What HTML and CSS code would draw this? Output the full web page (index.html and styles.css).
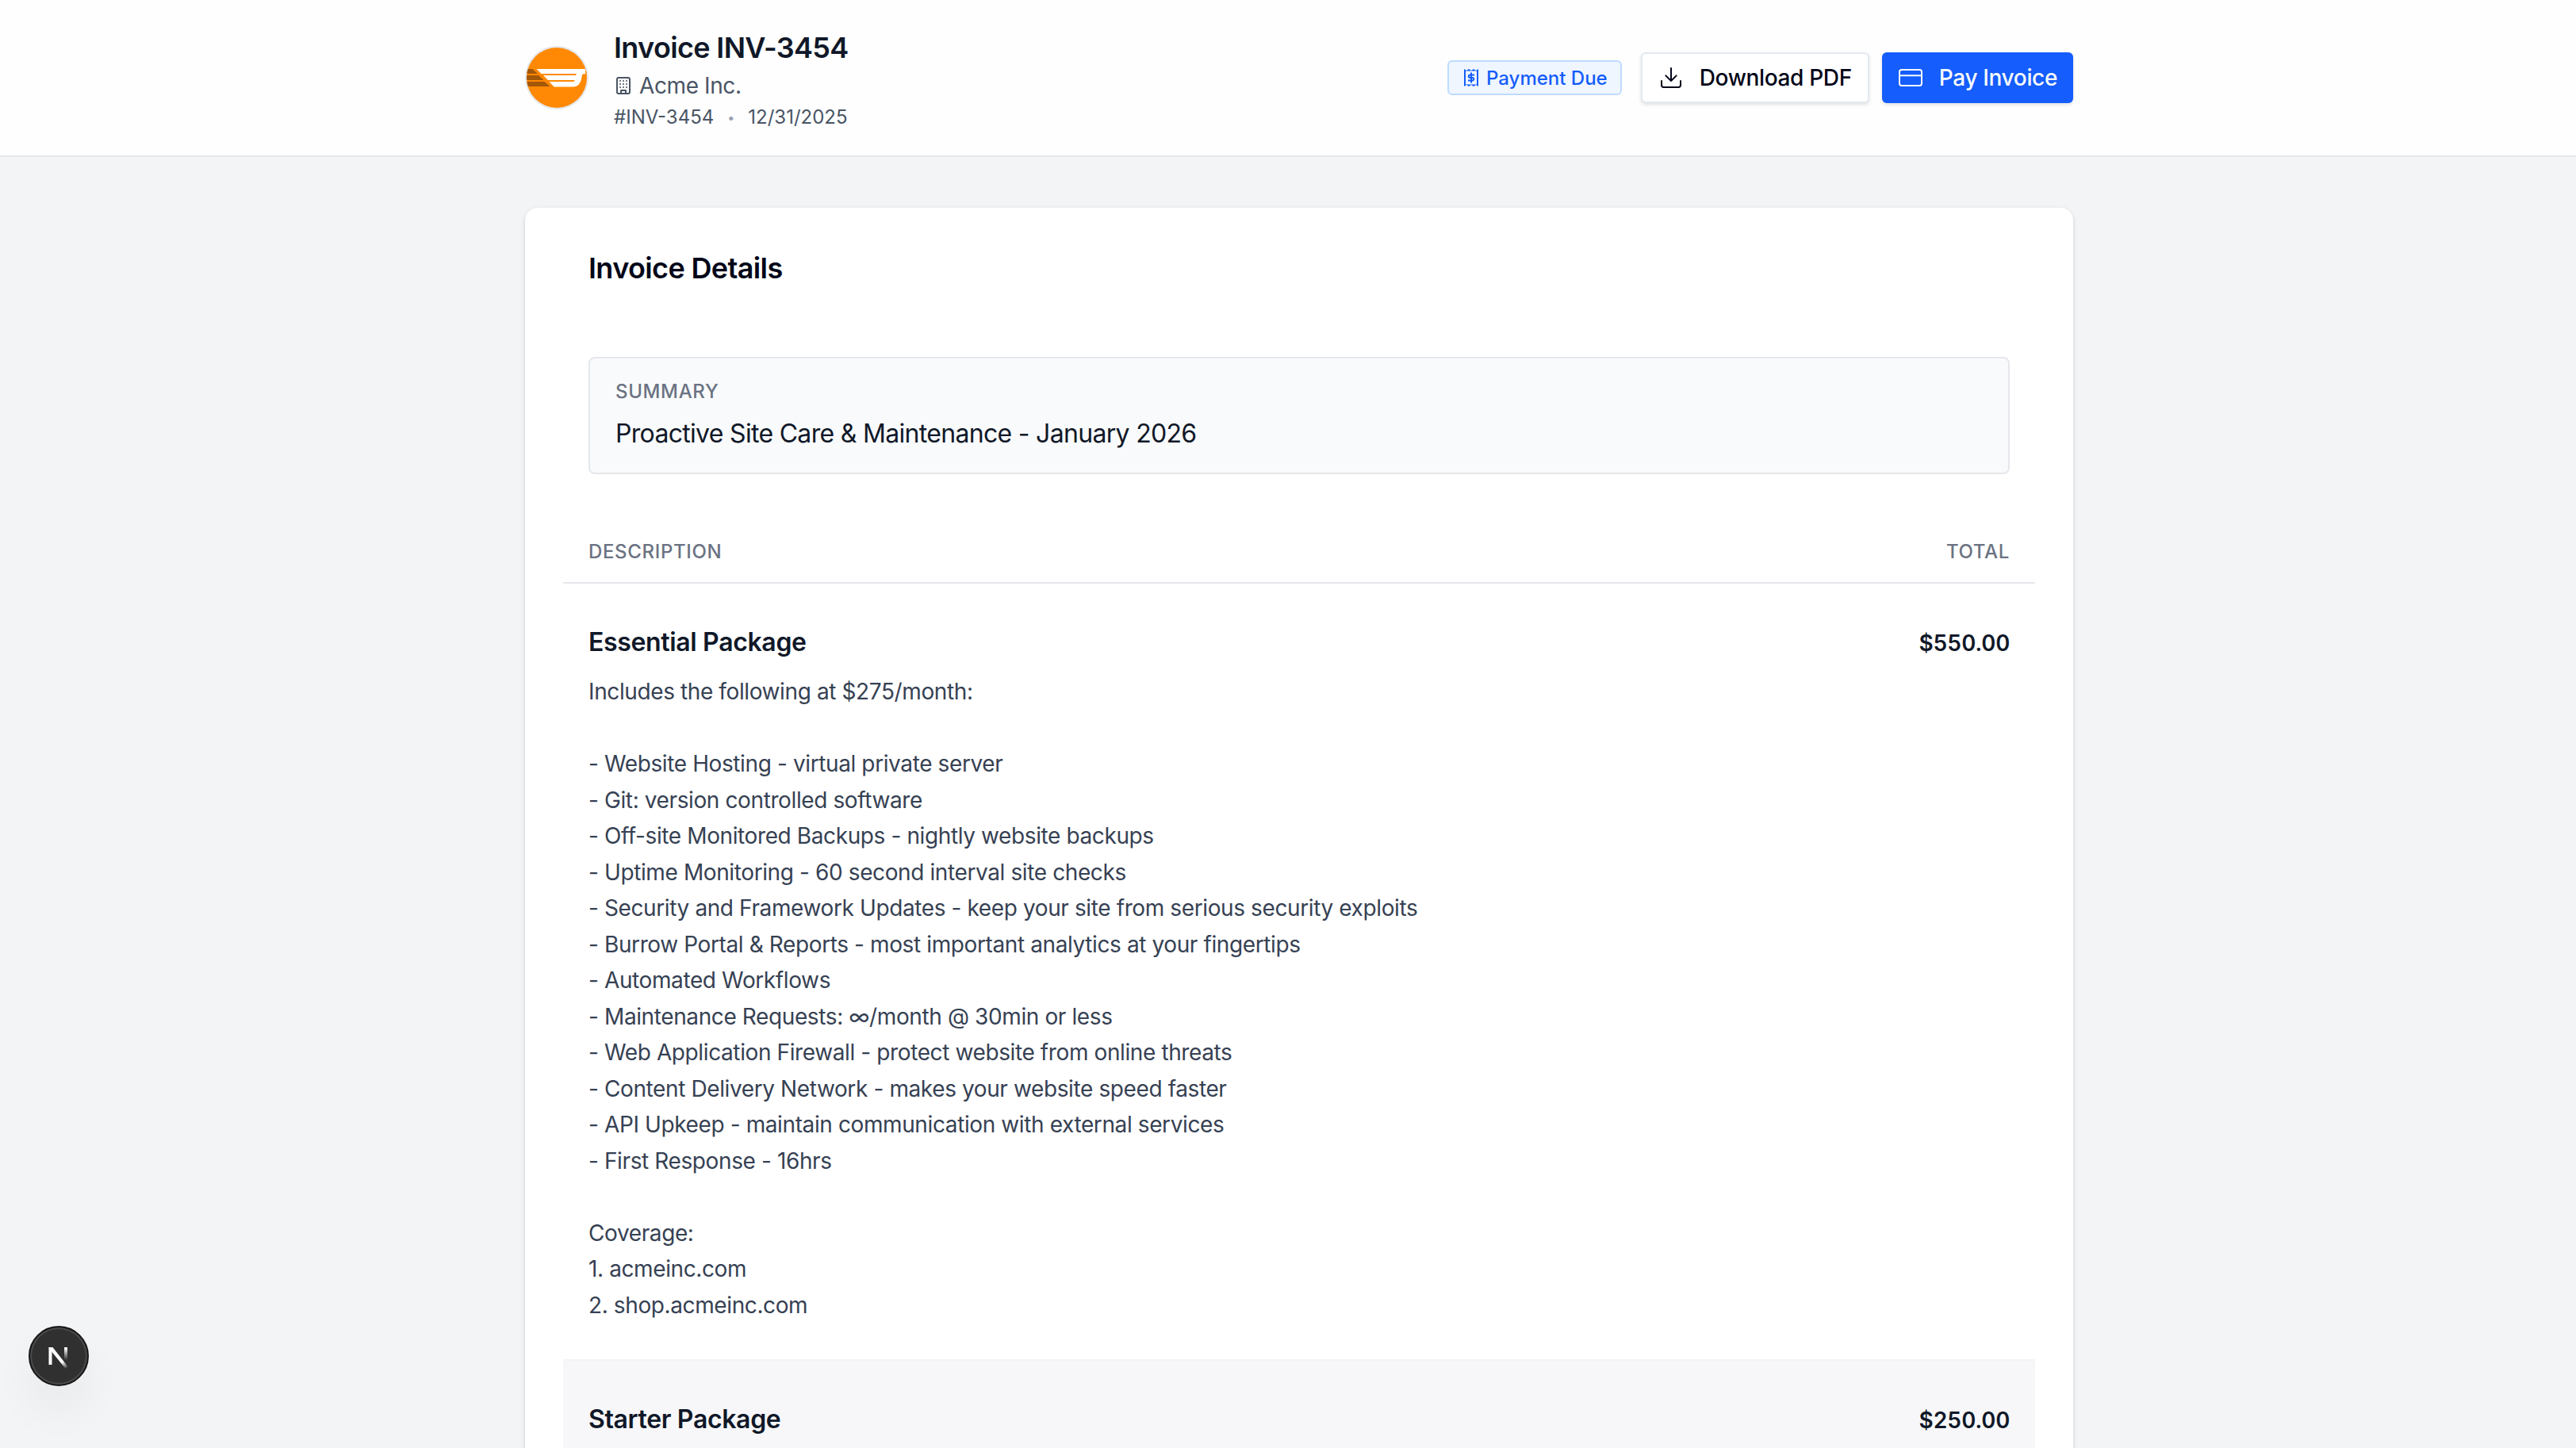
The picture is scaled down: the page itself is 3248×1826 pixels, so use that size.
FILE: index.html
```html
<!DOCTYPE html>
<html lang="en">

<head>
    <meta charset="UTF-8">
    <meta name="viewport" content="width=device-width, initial-scale=1.0">
    <title>Invoice INV-3454</title>
    <link rel="stylesheet" href="styles.css">
</head>

<body>
    <header class="header">
        <div class="container header-inner">
            <div class="brand">
                <svg class="logo" viewBox="0 0 80 80">
                    <defs>
                        <clipPath id="logo-clip"><circle cx="40" cy="40" r="38" /></clipPath>
                    </defs>
                    <circle cx="40" cy="40" r="40" fill="#e5e7eb" />
                    <circle cx="40" cy="40" r="38" fill="#ff8904" />
                    <g clip-path="url(#logo-clip)">
                        <path d="M0 29h9.500l6.500 6H0zM0 37h17l6.500 6H0zM0 45h24.500l7 6H0z" fill="#a35708" />
                        <path d="M14.500 29H76v6.200h-2.500c-1 0-1.500 1-1.800 3C70.500 47 67 51.500 60 51.500H36.500L30.500 45H60c1.500 0 2.500-.8 3-2H29l-6-6h41c.2-.8.500-1.500 1-2H20.500z" fill="#fff" />
                    </g>
                </svg>
                <div class="brand-info">
                    <h1 class="title">Invoice INV-3454</h1>
                    <p class="company">
                        <svg class="icon-building" viewBox="0 0 24 24" fill="none" stroke="currentColor" stroke-width="2" stroke-linecap="round" stroke-linejoin="round">
                            <rect width="16" height="20" x="4" y="2" rx="2" />
                            <path d="M9 22v-4h6v4M8 6h.01M16 6h.01M12 6h.01M12 10h.01M12 14h.01M16 10h.01M16 14h.01M8 10h.01M8 14h.01" />
                        </svg>
                        Acme Inc.
                    </p>
                    <p class="meta"><span>#INV-3454</span><span class="dot">•</span><span>12/31/2025</span></p>
                </div>
            </div>
            <div class="actions">
                <span class="badge">
                    <svg class="icon-receipt" viewBox="0 0 18 22" fill="none" stroke="currentColor" stroke-width="2">
                        <path d="M1 1v20M17 1v20" />
                        <path d="M0 0l3 2 3-2 3 2 3-2 3 2 3-2v2.500H0zM0 22l3-2 3 2 3-2 3 2 3-2 3 2v-2.500H0z" fill="currentColor" stroke="none" />
                        <path d="M13 7.500H7.500a1.700 1.700 0 0 0 0 3.500h3a1.700 1.700 0 0 1 0 3.500H5M9 4.500v13" />
                    </svg>
                    Payment Due
                </span>
                <button class="btn btn-outline">
                    <svg class="icon" viewBox="0 0 24 24" fill="none" stroke="currentColor" stroke-width="1.500" stroke-linecap="round" stroke-linejoin="round">
                        <path d="M21 15v4a2 2 0 0 1-2 2H5a2 2 0 0 1-2-2v-4M7 10l5 5 5-5M12 15V3" />
                    </svg>
                    Download PDF
                </button>
                <button class="btn btn-primary">
                    <svg class="icon" viewBox="0 0 24 24" fill="none" stroke="currentColor" stroke-width="1.500" stroke-linecap="round" stroke-linejoin="round">
                        <rect width="21" height="15" x="1.500" y="4.500" rx="2" />
                        <path d="M2 10h20" />
                    </svg>
                    Pay Invoice
                </button>
            </div>
        </div>
    </header>

    <main class="container">
        <section class="card">
            <h2 class="card-title">Invoice Details</h2>

            <div class="summary">
                <p class="label">Summary</p>
                <p class="summary-text">Proactive Site Care &amp; Maintenance - January 2026</p>
            </div>

            <!-- line items -->
            <div class="items">
                <div class="items-head">
                    <span class="label">Description</span>
                    <span class="label">Total</span>
                </div>
                <div class="item">
                    <div>
                        <h3 class="item-name">Essential Package</h3>
                        <p class="item-text">Includes the following at $275/month:

- Website Hosting - virtual private server
- Git: version controlled software
- Off-site Monitored Backups - nightly website backups
- Uptime Monitoring - 60 second interval site checks
- Security and Framework Updates - keep your site from serious security exploits
- Burrow Portal &amp; Reports - most important analytics at your fingertips
- Automated Workflows
- Maintenance Requests: ∞/month @ 30min or less
- Web Application Firewall - protect website from online threats
- Content Delivery Network - makes your website speed faster
- API Upkeep - maintain communication with external services
- First Response - 16hrs

Coverage:
1. acmeinc.com
2. shop.acmeinc.com</p>
                    </div>
                    <span class="amount">$550.00</span>
                </div>
                <div class="item item-alt">
                    <h3 class="item-name">Starter Package</h3>
                    <span class="amount">$250.00</span>
                </div>
            </div>
        </section>
    </main>

    <!-- dev tools button, floats over the page -->
    <div class="dev-badge">
        <svg viewBox="0 0 36 36" fill="none">
            <defs>
                <linearGradient id="fade-diagonal" x1="19" y1="20" x2="29" y2="33" gradientUnits="userSpaceOnUse">
                    <stop offset="0.4" stop-color="#fff" />
                    <stop offset="1" stop-color="#fff" stop-opacity="0" />
                </linearGradient>
                <linearGradient id="fade-stem" x1="0" y1="8" x2="0" y2="23" gradientUnits="userSpaceOnUse">
                    <stop stop-color="#fff" />
                    <stop offset="1" stop-color="#fff" stop-opacity="0" />
                </linearGradient>
            </defs>
            <rect x="5.500" y="7" width="4" height="22" fill="#fff" />
            <path d="M5.500 7h5L30 32l-3 2.500L5.500 8z" fill="url(#fade-diagonal)" />
            <rect x="25" y="7" width="4" height="16" fill="url(#fade-stem)" />
        </svg>
    </div>
</body>

</html>
```

FILE: styles.css
```css
/* Reset */
* {
    margin: 0;
    padding: 0;
    box-sizing: border-box;
}

html,
body {
    height: 1826px;
    overflow: hidden;
}

body {
    font-family: Inter, sans-serif;
    font-size: 28px;
    background-color: #f3f4f6;
    color: #101828;
}

.container {
    width: 1980px;
    margin: 0 auto;
    padding-left: 28px;
}

/* Header */
.header {
    height: 198px;
    background-color: #fefefe;
    border-bottom: 2px solid #e5e7eb;
}

.header-inner {
    display: flex;
    justify-content: space-between;
    align-items: center;
    height: 196px;
}

.brand {
    display: flex;
    align-items: center;
    gap: 32px;
}

.logo {
    width: 80px;
    height: 80px;
}

.brand-info {
    padding-top: 6px;
}

.title {
    font-size: 36px;
    line-height: 45px;
    font-weight: 600;
    letter-spacing: -0.65px;
}

.company {
    display: flex;
    align-items: center;
    gap: 8px;
    margin-top: 5px;
    font-size: 28px;
    line-height: 40px;
    letter-spacing: -0.4px;
    color: #4a5565;
}

.icon-building {
    width: 24px;
    height: 24px;
}

.meta {
    display: flex;
    gap: 16px;
    margin-top: 4px;
    font-size: 24px;
    line-height: 32px;
    color: #4a5565;
}

.dot {
    width: 11px;
    font-size: 16px;
    text-align: center;
    color: #99a1af;
}

.actions {
    display: flex;
    align-items: center;
    gap: 16px;
}

.badge {
    display: flex;
    align-items: center;
    gap: 10px;
    height: 44px;
    margin-right: 8px;
    padding: 0 16px 0 19px;
    font-size: 24px;
    font-weight: 500;
    color: #155dfc;
    background-color: #eff6ff;
    border: 2px solid #bedbff;
    border-radius: 6px;
}

.icon-receipt {
    width: 18px;
    height: 22px;
}

.btn {
    display: flex;
    align-items: center;
    gap: 20px;
    height: 64px;
    padding: 0 20px;
    font-family: inherit;
    font-size: 28px;
    font-weight: 500;
    letter-spacing: -0.35px;
    border: none;
    border-radius: 6px;
    box-shadow: 0 2px 4px rgba(0, 0, 0, 0.12);
}

.btn-outline {
    color: #020618;
    background-color: #fff;
    border: 2px solid #e2e8f0;
}

.btn-primary {
    color: #f8fafc;
    background-color: #155dfc;
}

.icon {
    width: 32px;
    height: 32px;
}

/* Card */
.card {
    height: 1700px;
    margin-top: 64px;
    padding: 48px;
    background-color: #fff;
    border-radius: 16px;
    box-shadow: 0 2px 6px rgba(0, 0, 0, 0.1), 0 2px 4px rgba(0, 0, 0, 0.06);
}

.card-title {
    padding: 0 32px;
    font-size: 36px;
    line-height: 56px;
    font-weight: 600;
    letter-spacing: -0.63px;
    color: #020618;
}

.summary {
    height: 148px;
    margin: 84px 32px 0;
    padding: 26px 32px;
    background-color: #f9fafb;
    border: 2px solid #e5e7eb;
    border-radius: 8px;
}

.label {
    font-size: 24px;
    line-height: 32px;
    font-weight: 500;
    letter-spacing: 0.65px;
    text-transform: uppercase;
    color: #6a7282;
}

.summary-text {
    margin-top: 11px;
    font-size: 32px;
    line-height: 52px;
    letter-spacing: -0.69px;
}

/* Line items */
.items {
    margin-top: 64px;
}

.items-head {
    display: flex;
    justify-content: space-between;
    padding: 18px 32px 22px;
    border-bottom: 2px solid #e5e7eb;
}

.item {
    display: flex;
    justify-content: space-between;
    height: 978px;
    padding: 48px 32px;
}

.item-alt {
    background-color: #f7f7f9;
    border-top: 2px solid #f3f4f6;
}

.item-name {
    font-size: 32px;
    line-height: 52px;
    font-weight: 600;
    letter-spacing: -0.34px;
}

.item-text {
    margin-top: 14px;
    font-size: 28px;
    line-height: 45.5px;
    letter-spacing: -0.39px;
    color: #364153;
    white-space: pre-line;
}

.amount {
    font-size: 28px;
    line-height: 54px;
    font-weight: 600;
    letter-spacing: -0.25px;
    font-variant-numeric: tabular-nums;
}

/* Dev tools button */
.dev-badge {
    position: fixed;
    left: 36px;
    top: 1672px;
    display: flex;
    align-items: center;
    justify-content: center;
    width: 76px;
    height: 76px;
    background-color: #303030;
    border: 2px solid #171717;
    border-radius: 50%;
    box-shadow: inset 0 0 0 2px #4c4c4c, 0 32px 64px -16px rgba(0, 0, 0, 0.14);
}

.dev-badge svg {
    width: 36px;
    height: 36px;
}
```
